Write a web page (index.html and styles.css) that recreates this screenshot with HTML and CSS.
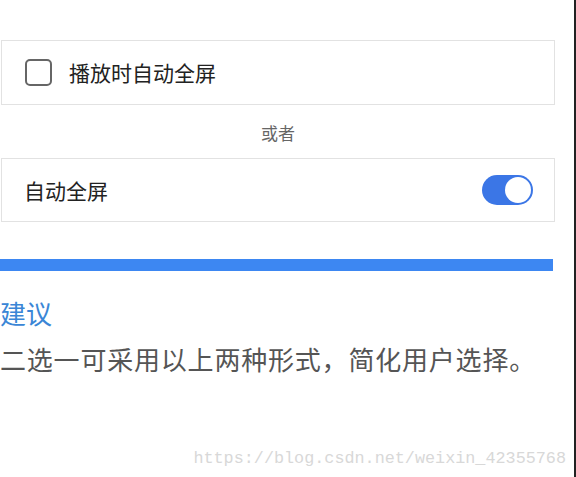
FILE: index.html
```html
<!DOCTYPE html>
<html lang="zh-CN">
<head>
<meta charset="utf-8">
<title>自动全屏</title>
<link rel="stylesheet" href="styles.css">
</head>
<body>
<div class="page">
  <div class="option-box">
    <span class="checkbox"></span>
    <span class="label">播放时自动全屏</span>
  </div>
  <div class="or">或者</div>
  <div class="option-box switch-row">
    <span class="label">自动全屏</span>
    <span class="toggle"><span class="knob"></span></span>
  </div>
  <div class="bar"></div>
  <h2 class="title">建议</h2>
  <p class="desc">二选一可采用以上两种形式，简化用户选择。</p>
  <div class="watermark">https://blog.csdn.net/weixin_42355768</div>
</div>
</body>
</html>
```
FILE: styles.css
```css
html, body {
  margin: 0;
  padding: 0;
  background: #fff;
}
.page {
  box-sizing: border-box;
  width: 576px;
  height: 477px;
  padding-top: 40px;
  border-right: 2px solid #222;
  font-family: "Noto Sans CJK SC", "Noto Sans", sans-serif;
  display: flex;
  flex-direction: column;
  overflow: hidden;
}
.option-box {
  box-sizing: border-box;
  margin-left: 1px;
  width: 554px;
  height: 65px;
  border: 1px solid #e2e2e2;
  display: flex;
  align-items: center;
  padding-left: 23px;
}
.checkbox {
  box-sizing: border-box;
  width: 27px;
  height: 27px;
  border: 2px solid #666;
  border-radius: 5px;
  margin-right: 17px;
}
.label {
  font-size: 21px;
  color: #222;
  line-height: 1;
}
.or {
  box-sizing: border-box;
  margin-left: 1px;
  width: 554px;
  height: 53px;
  display: flex;
  align-items: center;
  justify-content: center;
  font-size: 17px;
  color: #666;
  padding-top: 2px;
}
.switch-row {
  height: 64px;
  justify-content: space-between;
  padding-left: 22px;
  padding-right: 21px;
}
.toggle {
  box-sizing: border-box;
  width: 51px;
  height: 30px;
  border-radius: 15px;
  background: #3b76e6;
  display: flex;
  align-items: center;
  justify-content: flex-end;
  padding-right: 2px;
}
.knob {
  box-sizing: border-box;
  width: 26px;
  height: 26px;
  border-radius: 50%;
  background: #fff;
}
.bar {
  margin-top: 37px;
  width: 553px;
  height: 12px;
  background: #3d87f2;
}
.title {
  margin: 24px 0 0 0;
  font-size: 26px;
  font-weight: normal;
  line-height: 36px;
  color: #3a86d6;
}
.desc {
  margin: 10px 0 0 0;
  font-size: 26px;
  line-height: 36px;
  color: #555;
  letter-spacing: 0.8px;
}
.watermark {
  margin-top: auto;
  margin-bottom: 8px;
  align-self: flex-end;
  margin-right: 8px;
  font-family: "Liberation Mono", monospace;
  font-size: 16.8px;
  line-height: 20px;
  color: #d8d8d8;
}
```
